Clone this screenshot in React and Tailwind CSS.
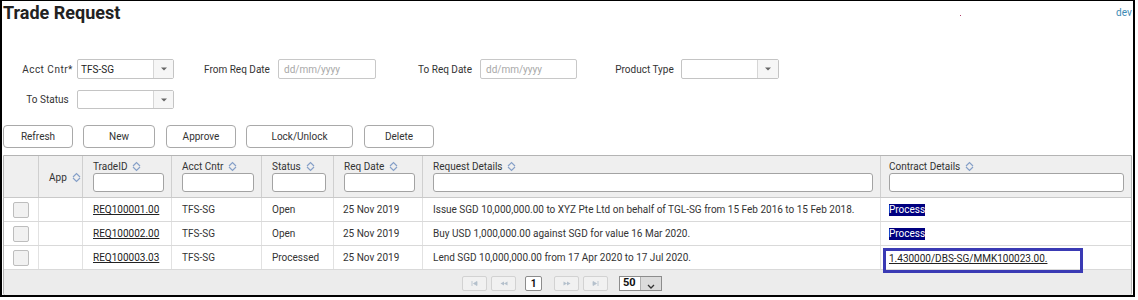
import React from 'react';

const SortIcon = () => (
    <svg width="9" height="11" viewBox="0 0 9 11" className="inline-block ml-[5px] shrink-0">
        <path d="M1 5L4.5 1.5L8 5M1 6L4.5 9.5L8 6" fill="none" stroke="#86a0c8" strokeWidth="1.2" />
    </svg>
);

function Select({ value, className, seg = 'w-[20px]' }) {
    return (
        <div className={`flex border border-[#c4c4c4] rounded-[2px] bg-white ${className}`}>
            <div className="flex-1 flex items-center pl-[3px] text-[#222]">{value}</div>
            <div className={`${seg} flex items-center justify-center border-l border-[#d6d6d6] bg-[#f6f6f6]`}>
                <svg width="6" height="4" viewBox="0 0 6 4">
                    <path d="M0 0.5H6L3 3.5Z" fill="#666" />
                </svg>
            </div>
        </div>
    );
}

function DateInput({ className }) {
    return (
        <div className={`flex items-center h-[20px] pl-[5px] border border-[#c8c8c8] rounded-[2px] bg-white text-[#a8a8a8] ${className}`}>
            dd/mm/yyyy
        </div>
    );
}

const cols = [
    { w: 'chk' },
    { label: 'App', nofilter: true },
    { label: 'TradeID' },
    { label: 'Acct Cntr' },
    { label: 'Status' },
    { label: 'Req Date' },
    { label: 'Request Details' },
    { label: 'Contract Details', pad: 'pl-[8px]' },
];

const rows = [
    {
        id: 'REQ100001.00',
        status: 'Open',
        details: 'Issue SGD 10,000,000.00 to XYZ Pte Ltd on behalf of TGL-SG from 15 Feb 2016 to 15 Feb 2018.',
        contract: 'process',
    },
    {
        id: 'REQ100002.00',
        status: 'Open',
        details: 'Buy USD 1,000,000.00 against SGD for value 16 Mar 2020.',
        contract: 'process',
    },
    {
        id: 'REQ100003.03',
        status: 'Processed',
        details: 'Lend SGD 10,000,000.00 from 17 Apr 2020 to 17 Jul 2020.',
        contract: 'link',
    },
];

const grid = 'grid grid-cols-[35px_44px_89px_90px_72px_89px_458px_250px]';

function PagerBtn({ children }) {
    return (
        <div className="w-[25px] h-[15px] flex items-center justify-center border border-[#d2d2d2] rounded-[2px] bg-[#f1f1f1]">
            {children}
        </div>
    );
}

export default function App() {
    const buttons = [
        ['Refresh', 'w-[70px]', ''],
        ['New', 'w-[72px]', 'ml-[10px]'],
        ['Approve', 'w-[70px]', 'ml-[11px]'],
        ['Lock/Unlock', 'w-[107px]', 'ml-[10px]'],
        ['Delete', 'w-[70px]', 'ml-[11px]'],
    ];

    return (
        <div className="w-[1138px] h-[300px] bg-white font-['Roboto','Liberation_Sans',sans-serif] text-[10px] text-[#333]">
            <div className="relative w-[1135px] h-[297px] border-l-2 border-r-2 border-t border-b-2 border-black overflow-hidden">
                {/* top right bits */}
                <span className="absolute left-[958px] top-[14px] w-[1px] h-[1px] bg-[#b0406a]" />
                <span className="absolute left-[1114px] top-[6px] text-[10px] leading-[12px] text-[#3d8bb5]">dev</span>

                <h1 className="mt-[1px] pl-[1px] text-[18px] leading-[22px] font-bold text-[#222]">Trade Request</h1>

                {/* filters */}
                <div className="flex items-center h-[20px] mt-[35px] pl-[16px]">
                    <span className="w-[59px] text-center tracking-[0.5px]">Acct Cntr*</span>
                    <Select className="w-[97px] h-[20px]" value="TFS-SG" />
                    <span className="ml-[22px] w-[82px] text-center">From Req Date</span>
                    <DateInput className="w-[98px]" />
                    <span className="ml-[34px] w-[70px] text-center">To Req Date</span>
                    <DateInput className="w-[97px]" />
                    <span className="ml-[31px] w-[73px] text-center">Product Type</span>
                    <Select className="w-[98px] h-[20px]" seg="w-[21px]" />
                </div>
                <div className="flex items-center h-[19px] mt-[11px] pl-[16px]">
                    <span className="w-[59px] text-center">To Status</span>
                    <Select className="w-[97px] h-[19px]" />
                </div>

                {/* actions */}
                <div className="flex mt-[16px] ml-[1px]">
                    {buttons.map(([t, w, m]) => (
                        <button
                            key={t}
                            className={`${w} ${m} h-[23px] border border-[#a9a9a9] rounded-[4px] bg-white text-[10px] text-[#333]`}
                        >
                            {t}
                        </button>
                    ))}
                </div>

                {/* grid */}
                <div className="mt-[7px] ml-[1px] w-[1129px] border border-[#b4b4b4] rounded-b-[3px] overflow-hidden">
                    <div className={`${grid} h-[42px] bg-[#efefef] border-b border-[#c9c9c9]`}>
                        {cols.map((c, i) => (
                            <div
                                key={i}
                                className={`${i < cols.length - 1 ? 'border-r border-[#cfcfcf]' : ''} ${c.pad || 'pl-[10px]'} pr-[7px]`}
                            >
                                {c.label && c.nofilter && (
                                    <div className="h-full flex items-center pt-[2px]">
                                        {c.label}
                                        <SortIcon />
                                    </div>
                                )}
                                {c.label && !c.nofilter && (
                                    <div className="pt-[3px]">
                                        <div className="h-[14px] flex items-center">
                                            {c.label}
                                            <SortIcon />
                                        </div>
                                        <div className="h-[19px] border border-[#a3a3a3] rounded-[3px] bg-white" />
                                    </div>
                                )}
                            </div>
                        ))}
                    </div>

                    {rows.map((r) => (
                        <div key={r.id} className={`${grid} h-[24px] bg-white border-b border-[#d9d9d9]`}>
                            <div className="flex items-center justify-center border-r border-[#e2e2e2]">
                                <div className="w-[16px] h-[16px] border border-[#bdbdbd] rounded-[2px] bg-[#f1f1f1]" />
                            </div>
                            <div className="border-r border-[#e2e2e2]" />
                            <div className="flex items-center pl-[10px] border-r border-[#e2e2e2]">
                                <span className="underline text-[#222]">{r.id}</span>
                            </div>
                            <div className="flex items-center pl-[10px] border-r border-[#e2e2e2]">TFS-SG</div>
                            <div className="flex items-center pl-[10px] border-r border-[#e2e2e2]">{r.status}</div>
                            <div className="flex items-center pl-[9px] border-r border-[#e2e2e2]">25 Nov 2019</div>
                            <div className="flex items-center pl-[10px] border-r border-[#e2e2e2] whitespace-nowrap">{r.details}</div>
                            <div className="relative flex items-center pl-[8px]">
                                {r.contract === 'process' ? (
                                    <span className="bg-[#000080] text-white leading-[12px]">Process</span>
                                ) : (
                                    <>
                                        <span className="underline text-[#222] pt-[2px]">1.430000/DBS-SG/MMK100023.00.</span>
                                        <div className="absolute left-[2px] top-[2px] w-[200px] h-[25px] border-[3px] border-[#3a3ab4]" />
                                    </>
                                )}
                            </div>
                        </div>
                    ))}

                    {/* pager */}
                    <div className="h-[25px] flex items-center pl-[458px] pt-[1px] bg-[#ececec]">
                        <PagerBtn>
                            <svg width="7" height="5" viewBox="0 0 7 5">
                                <path d="M1 0V5M6 0.5L2.5 2.5L6 4.5Z" stroke="#b4c0cc" fill="#b4c0cc" strokeWidth="0.8" />
                            </svg>
                        </PagerBtn>
                        <div className="ml-[4px]">
                            <PagerBtn>
                                <svg width="8" height="5" viewBox="0 0 8 5">
                                    <path d="M4 0.5L0.5 2.5L4 4.5ZM7.5 0.5L4 2.5L7.5 4.5Z" fill="#b4c0cc" />
                                </svg>
                            </PagerBtn>
                        </div>
                        <div className="ml-[9px] w-[17px] h-[15px] flex items-center justify-center border border-[#8c8c8c] rounded-[2px] bg-white font-bold text-[#111]">
                            1
                        </div>
                        <div className="ml-[12px]">
                            <PagerBtn>
                                <svg width="8" height="5" viewBox="0 0 8 5">
                                    <path d="M0.5 0.5L4 2.5L0.5 4.5ZM4 0.5L7.5 2.5L4 4.5Z" fill="#b4c0cc" />
                                </svg>
                            </PagerBtn>
                        </div>
                        <div className="ml-[4px]">
                            <PagerBtn>
                                <svg width="7" height="5" viewBox="0 0 7 5">
                                    <path d="M1 0.5L4.5 2.5L1 4.5ZM6 0V5" stroke="#b4c0cc" fill="#b4c0cc" strokeWidth="0.8" />
                                </svg>
                            </PagerBtn>
                        </div>
                        <div className="ml-[11px] w-[43px] h-[15px] flex border border-[#8c8c8c] bg-white">
                            <div className="flex-1 flex items-center pl-[3px] font-bold text-[11px] text-[#111]">50</div>
                            <div className="w-[21px] flex items-end justify-center pb-[1px] bg-[#dcdcdc] border-l border-[#b0b0b0]">
                                <svg width="8" height="5" viewBox="0 0 8 5">
                                    <path d="M1 1L4 4L7 1" fill="none" stroke="#333" strokeWidth="1.3" />
                                </svg>
                            </div>
                        </div>
                    </div>
                </div>
            </div>
        </div>
    );
}
